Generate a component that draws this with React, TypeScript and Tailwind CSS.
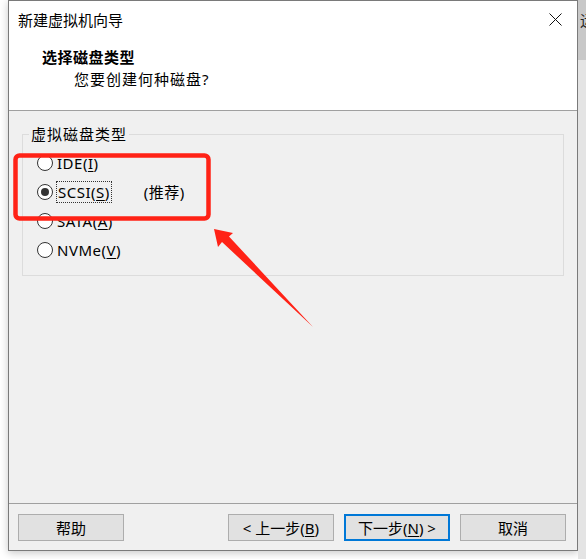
import type { ReactNode } from 'react'

const font = "font-['Noto_Sans','Noto_Sans_CJK_SC',sans-serif]"

// Win10 style radio button
function Radio({ checked, children }: { checked?: boolean; children: ReactNode }) {
  return (
    <div className="flex items-center h-[29px]">
      <span className="w-4 h-4 rounded-full border border-[#333333] bg-white flex items-center justify-center">
        {checked && <span className="w-2 h-2 rounded-full bg-[#333333]" />}
      </span>
      <div className="ml-[3px] flex items-center">{children}</div>
    </div>
  )
}

function Key({ k }: { k: string }) {
  return <span className="underline underline-offset-2 decoration-1">{k}</span>
}

function Button({ primary, children }: { primary?: boolean; children: ReactNode }) {
  return (
    <button
      className={`w-[106px] h-[27px] bg-[#e1e1e1] text-[15px] leading-[20px] text-black flex items-center justify-center ${
        primary ? 'border-2 border-[#0078d7]' : 'border border-[#adadad]'
      }`}
    >
      {children}
    </button>
  )
}

export default function App() {
  return (
    <div className={`relative w-[586px] h-[559px] bg-white overflow-hidden flex ${font}`}>
      <div className="w-[8px]" />

      {/* Dialog */}
      <div className="w-[570px] h-[551px] border border-[#7a7a7a] bg-[#f0f0f0] flex flex-col shadow-[0_2px_8px_rgba(0,0,0,0.22)]">
        {/* Header */}
        <div className="h-[110px] bg-white border-b border-[#a0a0a0]">
          <div className="flex items-center justify-between pt-[9px] pl-[9px]">
            <span className="text-[15px] leading-[20px] text-black">新建虚拟机向导</span>
            <svg width="13" height="13" viewBox="0 0 13 13" className="mr-[15px] -mt-[2px]">
              <path d="M0.5 0.5 L12.5 12.5 M12.5 0.5 L0.5 12.5" stroke="#111" strokeWidth="1" />
            </svg>
          </div>
          <div className="mt-[17px] pl-[33px] text-[15px] leading-[20px] font-bold text-black tracking-[0.5px]">选择磁盘类型</div>
          <div className="mt-[2px] pl-[65px] text-[15px] leading-[20px] text-black tracking-[1px]">您要创建何种磁盘?</div>
        </div>

        {/* Body */}
        <div className="flex-1 flex flex-col">
          <fieldset className="mt-[13px] mx-[13px] h-[152px] border border-[#dcdcdc]">
            <legend className="ml-[6px] px-[2px] text-[15px] leading-[20px] text-black tracking-[1px]">虚拟磁盘类型</legend>
            <div className="pl-[14px] pt-[4px] text-[15px] leading-[20px] text-black tracking-[0.5px]">
              <Radio>
                <span className="px-px">IDE(<Key k="I" />)</span>
              </Radio>
              <Radio checked>
                <span className="px-px border border-dotted border-[#333]">SCSI(<Key k="S" />)</span>
                <span className="ml-[32px]">(推荐)</span>
              </Radio>
              <Radio>
                <span className="px-px">SATA(<Key k="A" />)</span>
              </Radio>
              <Radio>
                <span className="px-px">NVMe(<Key k="V" />)</span>
              </Radio>
            </div>
          </fieldset>

          <div className="flex-1" />

          {/* Footer buttons */}
          <div className="border-t border-[#a0a0a0] pt-[10px] pb-[9px] pl-[9px] pr-[11px] flex justify-between">
            <Button>帮助</Button>
            <div className="flex gap-[10px]">
              <Button>
                &lt; 上一步(<Key k="B" />)
              </Button>
              <Button primary>
                下一步(<Key k="N" />) &gt;
              </Button>
              <Button>取消</Button>
            </div>
          </div>
        </div>
      </div>

      {/* window behind, peeking on the right */}
      <div className="w-[8px] flex flex-col">
        <div className="h-[60px] bg-[#c8c8c8] overflow-hidden pl-[2px] pt-[10px] text-[15px] leading-[20px] text-[#222]">运</div>
        <div className="flex-1 bg-[#e4e4e4]" />
      </div>

      {/* Red annotation */}
      <svg className="absolute inset-0 pointer-events-none" width="586" height="559" viewBox="0 0 586 559">
        <rect x="15.5" y="155.5" width="193" height="63" rx="4" fill="none" stroke="#ff2216" strokeWidth="4.5" />
        <polygon points="214,229 233,233 229,236.5 313,327 222,242 218,247" fill="#ff2216" />
      </svg>
    </div>
  )
}
